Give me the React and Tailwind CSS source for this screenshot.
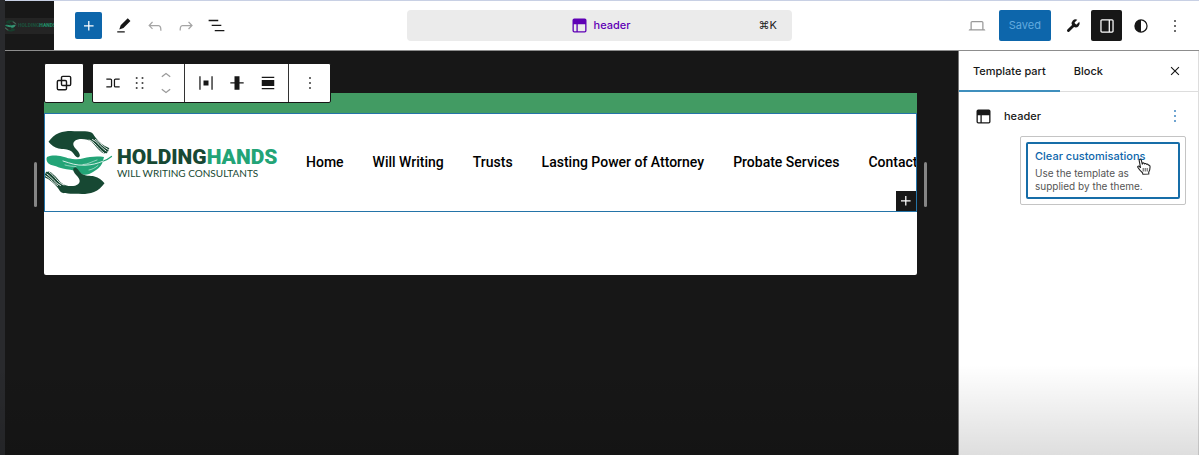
import React from "react";

const PATHS = {
  plus: "M11 12.5V17.5H12.5V12.5H17.5V11H12.5V6H11V11H6V12.5H11Z",
  edit: "M20.6 5.3L17 1.700 7.600 11l-1.900 5.700 5.600-2L20.600 5.300zM3 20.800h10v-1.700H3v1.700z",
  undo: "M18.3 11.7c-.6-.6-1.4-.9-2.3-.9H6.7l2.9-3.3-1.1-1-4.5 5L8.5 16l1-1-2.7-2.7H16c.5 0 .9.2 1.3.5 1 1 1 3.4 1 4.5v.3h1.5v-.2c0-1.5 0-4.3-1.5-5.7z",
  redo: "M15.6 6.5l-1.1 1 2.9 3.3H8c-.9 0-1.7.3-2.3.9-1.4 1.5-1.4 4.2-1.4 5.6v.2h1.5v-.3c0-1.1 0-3.5 1-4.5.3-.3.7-.5 1.3-.5h9.2L14.5 15l1.1 1.1 4.6-4.6-4.6-5z",
  list: "M3 5.5h11V7H3V5.5Zm3.5 5.7h11v1.5h-11v-1.5ZM21 17H10v1.5h11V17Z",
  layout:
    "M18.5 10.5H10v8h8a.5.5 0 00.5-.5v-7.5zm-10 0h-3V18a.5.5 0 00.5.5h2.5v-8zM6 4h12a2 2 0 012 2v12a2 2 0 01-2 2H6a2 2 0 01-2-2V6a2 2 0 012-2z",
  laptop:
    "M20.5 16h-.7V8c0-1.100-.9-2-2-2H6.200c-1.100 0-2 .9-2 2v8h-.7c-.8 0-1.500.700-1.500 1.500h20c0-.8-.7-1.500-1.500-1.500zM5.700 8c0-.3.200-.5.500-.5h11.600c.3 0 .5.200.5.500v8H5.700V8z",
  drawer:
    "M18 4H6c-1.100 0-2 .9-2 2v12c0 1.100.9 2 2 2h12c1.100 0 2-.9 2-2V6c0-1.100-.9-2-2-2zm-4 14.500H6c-.3 0-.5-.2-.5-.5V6c0-.3.200-.5.500-.5h8v13zm4.500-.5c0 .3-.2.500-.5.500h-2.500v-13H18c.3 0 .5.200.5.500v12z",
  styles:
    "M20 12a8 8 0 1 1-16 0 8 8 0 0 1 16 0Zm-1.500 0a6.500 6.500 0 0 1-6.500 6.500v-13a6.500 6.500 0 0 1 6.500 6.500Z",
  more: "M13 19h-2v-2h2v2zm0-6h-2v-2h2v2zm0-6h-2V5h2v2z",
  row: "M4 6.500h5a2 2 0 0 1 2 2v7a2 2 0 0 1-2 2H4V16h5a.5.5 0 0 0 .5-.5v-7A.5.5 0 0 0 9 8H4V6.500Zm16 0h-5a2 2 0 0 0-2 2v7a2 2 0 0 0 2 2h5V16h-5a.5.5 0 0 1-.5-.5v-7A.5.5 0 0 1 15 8h5V6.500Z",
  drag: "M7 7h2V5H7v2zm0 6h2v-2H7v2zm0 6h2v-2H7v2zm7-14v2h2V5h-2zm0 8h2v-2h-2v2zm0 6h2v-2h-2v2z",
  up: "M6.500 12.400L12 8l5.500 4.400-.9 1.200L12 10l-4.500 3.600-1-1.200z",
  down: "M17.500 11.600L12 16l-5.500-4.400.9-1.200L12 14l4.500-3.600 1 1.200z",
  justify: "M9 15h6V9H9v6zm-5 5h1.500V4H4v16zM18.500 4v16H20V4h-1.500z",
  middle: "M20 11h-5V4H9v7H4v1.500h5V20h6v-7.500h5z",
  align: "M4.500 4.500h15V6h-15V4.500zM4.500 8.500h15v7h-15v-7zM4.500 18h15v1.500h-15V18z",
  close: "M12 13.060l4.700 4.700 1.060-1.060-4.700-4.700 4.700-4.700L16.700 6.240 12 10.940l-4.700-4.700L6.240 7.300l4.700 4.700-4.700 4.700 1.060 1.060z",
};

function Icon({ name, className = "size-5" }) {
  return (
    <svg viewBox="0 0 24 24" className={`shrink-0 ${className}`} fill="currentColor" fillRule="evenodd" aria-hidden="true">
      <path d={PATHS[name]} />
    </svg>
  );
}

function WrenchIcon() {
  return (
    <svg viewBox="0 0 24 24" className="size-4 shrink-0" fill="currentColor" aria-hidden="true">
      <path d="M14.700 6.300a1 1 0 0 0 0 1.400l1.600 1.600a1 1 0 0 0 1.400 0l3.770-3.770a6 6 0 0 1-7.940 7.940l-6.910 6.910a2.120 2.120 0 0 1-3-3l6.910-6.910a6 6 0 0 1 7.940-7.940l-3.760 3.760z" />
    </svg>
  );
}

function OverlapIcon() {
  return (
    <svg viewBox="0 0 24 24" className="size-5 shrink-0" fill="none" stroke="currentColor" strokeWidth="1.700" aria-hidden="true">
      <rect x="9" y="4" width="11" height="11" rx="1.500" />
      <rect x="4" y="9" width="11" height="11" rx="1.500" />
    </svg>
  );
}

function ToolButton({ label, className = "", children }) {
  return (
    <button type="button" aria-label={label} className={`flex size-[27px] shrink-0 items-center justify-center ${className}`}>
      {children}
    </button>
  );
}

function Hand({ transform }) {
  return (
    <g transform={transform}>
      <path
        fill="#174833"
        d="M3.500 11.800C6.500 8 9.500 4.500 14 3 18 1.500 22 1 26 1c7 .5 13-.3 19 .9 3 .8 3.500 3 5.500 5.500 3.500 4.300 8 8.600 13 10.300 1.300.6.800 2-.6 1.800 1.300 1.200.5 2.300-.8 1.900.7 1.500-.3 2.300-1.600 1.700-1.500.9-3-.2-4.500-1.400-5.500-4.200-7.500-10-13.500-11.900-4.500-1.300-9.800-1.200-12.500 1-2.700 2.400-1.800 5 .5 7.700 1.800 2 3.900 4 4.300 6.500.2 2-1.700 3-3.200 2-2.300-1.500-2.800-4-5.300-5.800-3.500-2.500-8.300-1.600-12.800-2.700C9.500 17.500 6 15 3.500 11.800z"
      />
      <path
        fill="none"
        stroke="#fff"
        strokeWidth=".9"
        strokeLinecap="round"
        d="M44 10c6.500 2 8.500 8.500 15 13M47.500 9.500c5.500 2 7.500 7.500 13.500 11.500M50.500 9.500c4 2.500 6 6 12 9.700"
      />
    </g>
  );
}

function HandsMark({ className }) {
  return (
    <svg viewBox="0 0 68 66" className={`shrink-0 ${className}`} aria-hidden="true">
      <path
        fill="#23a477"
        d="M2 27c4-1.500 7-1.800 11-1.200 6 .8 10 3 17 3.500 6 .4 10-1.500 15-2.200 5-.8 9-.6 14-.2-1 3-1 6-3.500 9-2.500 3-5 4.500-7.500 6-3 2-7 3.500-10 2.500-3-1-5-3-9-4-5-1-10-1-15-2.800C10 35.500 6 35.500 3.500 33.500 1.500 31.500 1 29 2 27z"
      />
      <path fill="none" stroke="#23a477" strokeWidth="1.200" strokeLinecap="round" d="M56 32c4-1 7-2.500 10.500-5.500" />
      <path fill="none" stroke="#fff" strokeWidth=".8" strokeLinecap="round" d="M18 31c8 2.500 13 4.600 22 4.200 7-.3 12-1.600 18-4" />
      <path fill="none" stroke="#fff" strokeWidth=".5" strokeLinecap="round" d="M38 34.600c5-.3 9-3 14-4.600M44 40c3-.5 6-2 9-4.500M20 35c4 1 7 1.500 11 1.500" />
      <Hand />
      <Hand transform="rotate(180 31.500 32.500)" />
    </svg>
  );
}

function PointerCursor() {
  return (
    <svg viewBox="0 0 14 17" className="pointer-events-none absolute top-[14px] left-[109px] h-[17px] w-[14px]" aria-hidden="true">
      <path
        fill="#fff"
        stroke="#222"
        strokeWidth="1.100"
        strokeLinejoin="round"
        d="M3.500 9.500L2.200 2.600C2 1 3.900.7 4.300 2.200l1 4 .3-.9c.8-.8 1.700-.2 1.900.6.500-.8 1.700-.5 2 .4.800-.5 1.700 0 1.900.8.900-.2 1.500.4 1.600 1.300.2 2.500-.2 4-1.300 5.800l.1 1.800-6 .2-.3-1.500C4 13.500 2 11.500.8 9.300.3 8.200 1.600 7.600 2.500 8.500z"
      />
      <path stroke="#222" strokeWidth=".8" d="M6.200 10v3.500M8.200 10v3.500M10.200 10v3.500" />
    </svg>
  );
}

const NAV = ["Home", "Will Writing", "Trusts", "Lasting Power of Attorney", "Probate Services", "Contact"];

function TopBar() {
  return (
    <header className="flex h-[51px] shrink-0 border-t border-b border-t-[#c8d0e4] border-b-[#8d8d8d] bg-white">
      <div className="flex min-w-0 flex-1 items-center">
        <a href="#dashboard" aria-label="Open navigation" className="flex h-full w-[49px] shrink-0 items-center overflow-hidden bg-[#181818]">
          <span className="flex h-4 w-full items-center gap-px bg-[#272727] opacity-80">
            <HandsMark className="h-3 w-3" />
            <span className="font-['Roboto',sans-serif] text-[5px] font-black whitespace-nowrap text-[#1d5c43]">
              HOLDING<span className="text-[#23a477]">HANDS</span>
            </span>
          </span>
        </a>
        <div className="flex items-center gap-1 pl-[21px]">
          <ToolButton label="Add block" className="mr-1 rounded-xs bg-[#0d66ab] text-white">
            <Icon name="plus" />
          </ToolButton>
          <ToolButton label="Tools"><Icon name="edit" className="size-[18px]" /></ToolButton>
          <ToolButton label="Undo" className="text-[#a5a5a5]"><Icon name="undo" /></ToolButton>
          <ToolButton label="Redo" className="text-[#a5a5a5]"><Icon name="redo" /></ToolButton>
          <ToolButton label="List view"><Icon name="list" className="size-[21px]" /></ToolButton>
        </div>
      </div>
      <button
        type="button"
        className="grid h-[31px] w-[385px] grid-cols-[1fr_auto_1fr] items-center self-center rounded-sm bg-[#ebebeb] px-[15px] text-[11px]"
      >
        <span />
        <span className="flex items-center gap-1 font-medium text-[#5f00b5]">
          <Icon name="layout" className="size-[21px]" />
          header
        </span>
        <span className="text-right text-[#222]">⌘K</span>
      </button>
      <div className="flex w-[407px] shrink-0 items-center justify-end pr-[11px]">
        <ToolButton label="Preview" className="mr-2 text-[#999]"><Icon name="laptop" /></ToolButton>
        <button type="button" className="mr-2 h-[31px] rounded-xs bg-[#0d66ab] px-[10px] text-[11px] text-[#63abdf]">Saved</button>
        <ToolButton label="Plugins"><WrenchIcon /></ToolButton>
        <button type="button" aria-label="Settings" className="mx-[5px] flex size-[31px] items-center justify-center rounded-xs bg-[#171717] text-white">
          <Icon name="drawer" />
        </button>
        <ToolButton label="Styles" className="mr-[7px]"><Icon name="styles" /></ToolButton>
        <ToolButton label="Options"><Icon name="more" /></ToolButton>
      </div>
    </header>
  );
}

function BlockToolbar() {
  return (
    <div role="toolbar" aria-label="Block tools" className="absolute -top-[30px] left-0 flex gap-2">
      <div className="flex size-10 items-center justify-center rounded-xs border border-[#171717] bg-white">
        <ToolButton label="Select parent"><OverlapIcon /></ToolButton>
      </div>
      <div className="flex h-10 divide-x divide-[#333] rounded-xs border border-[#171717] bg-white">
        <div className="flex items-center px-[6px]">
          <ToolButton label="Row"><Icon name="row" /></ToolButton>
          <ToolButton label="Drag"><Icon name="drag" /></ToolButton>
          <div className="flex flex-col text-[#999]">
            <button type="button" aria-label="Move up" className="flex h-[14px] w-[25px] items-center justify-center"><Icon name="up" /></button>
            <button type="button" aria-label="Move down" className="flex h-[14px] w-[25px] items-center justify-center"><Icon name="down" /></button>
          </div>
        </div>
        <div className="flex items-center gap-1 px-[7px]">
          <ToolButton label="Justify"><Icon name="justify" /></ToolButton>
          <ToolButton label="Vertical alignment"><Icon name="middle" /></ToolButton>
          <ToolButton label="Align"><Icon name="align" /></ToolButton>
        </div>
        <div className="flex items-center px-[7px]">
          <ToolButton label="Block options"><Icon name="more" /></ToolButton>
        </div>
      </div>
    </div>
  );
}

function Canvas() {
  return (
    <main className="flex min-w-0 flex-1 items-start bg-[#171717] pt-[42px] pr-[31px] pl-[29px]">
      <div className="mt-[69px] mr-[7px] h-[45px] w-[3px] shrink-0 rounded-full bg-[#858585]" />
      <div className="relative min-w-0 flex-1">
        <div className="overflow-hidden rounded-b-xs bg-white">
          <div className="h-5 bg-[#429b63]" />
          <div className="relative flex h-[99px] items-center overflow-hidden border border-[#2474a8]">
            <a href="#home" className="flex shrink-0 items-center gap-1">
              <HandsMark className="h-[66px] w-[68px]" />
              <span className="flex w-[162px] flex-col">
                <span className="font-['Roboto',sans-serif] text-[21px] leading-[20px] font-black text-[#174833]">
                  HOLDING<span className="text-[#23a477]">HANDS</span>
                </span>
                <span className="font-['Lato',sans-serif] text-[10px] leading-3 whitespace-nowrap text-[#174833]">WILL WRITING CONSULTANTS</span>
              </span>
            </a>
            <nav className="ml-[27px] flex gap-[29px] font-['Roboto',sans-serif] text-[14px] font-medium whitespace-nowrap text-black">
              {NAV.map((item) => (
                <a key={item} href="#page">{item}</a>
              ))}
            </nav>
            <button type="button" aria-label="Add block" className="absolute right-0 bottom-0 flex size-5 items-center justify-center bg-[#171717] text-white">
              <Icon name="plus" />
            </button>
          </div>
          <div className="h-[63px]" />
        </div>
        <BlockToolbar />
      </div>
      <div className="mt-[69px] ml-[7px] h-[45px] w-[3px] shrink-0 rounded-full bg-[#858585]" />
    </main>
  );
}

function Sidebar() {
  return (
    <aside className="w-[241px] shrink-0 border-r border-l border-r-[#ddd] border-l-[#777] bg-white text-[11px] font-medium">
      <div className="flex h-[41px] items-stretch border-b border-[#ddd]">
        <div role="tablist" className="flex flex-1">
          <button type="button" role="tab" aria-selected="true" className="-mb-px border-y-2 border-t-transparent border-b-[#3f8fbd] px-[14px]">Template part</button>
          <button type="button" role="tab" aria-selected="false" className="px-[14px]">Block</button>
        </div>
        <ToolButton label="Close" className="mr-[10px] self-center"><Icon name="close" className="size-[18px]" /></ToolButton>
      </div>
      <div className="flex h-12 items-center gap-[10px] pr-[10px] pl-[14px]">
        <Icon name="layout" className="size-[21px]" />
        <h2 className="flex-1">header</h2>
        <ToolButton label="Actions" className="text-[#1a6fb5]"><Icon name="more" /></ToolButton>
      </div>
      <div role="menu" className="mr-3 ml-[61px] -mt-[4px] rounded-xs border border-[#c4c4c4] p-[5px]">
        <button type="button" role="menuitem" className="relative flex w-full flex-col rounded-xs border-2 border-[#176da8] px-[7px] py-1 text-left">
          <span className="leading-4 whitespace-nowrap text-[#0d66ab]">Clear customisations</span>
          <span className="pt-[3px] text-[10px] leading-[13px] font-normal text-[#555]">Use the template as supplied by the theme.</span>
          <PointerCursor />
        </button>
      </div>
    </aside>
  );
}

export default function App() {
  return (
    <div className="relative flex min-h-screen overflow-hidden bg-[#292a2d] pl-[5px] font-['Inter',sans-serif] text-[#171717]">
      <div className="flex min-w-0 flex-1 flex-col">
        <TopBar />
        <div className="flex flex-1">
          <Canvas />
          <Sidebar />
        </div>
      </div>
      <div className="pointer-events-none absolute inset-x-0 bottom-0 h-[90px] bg-linear-to-b from-transparent to-black/13" />
    </div>
  );
}
